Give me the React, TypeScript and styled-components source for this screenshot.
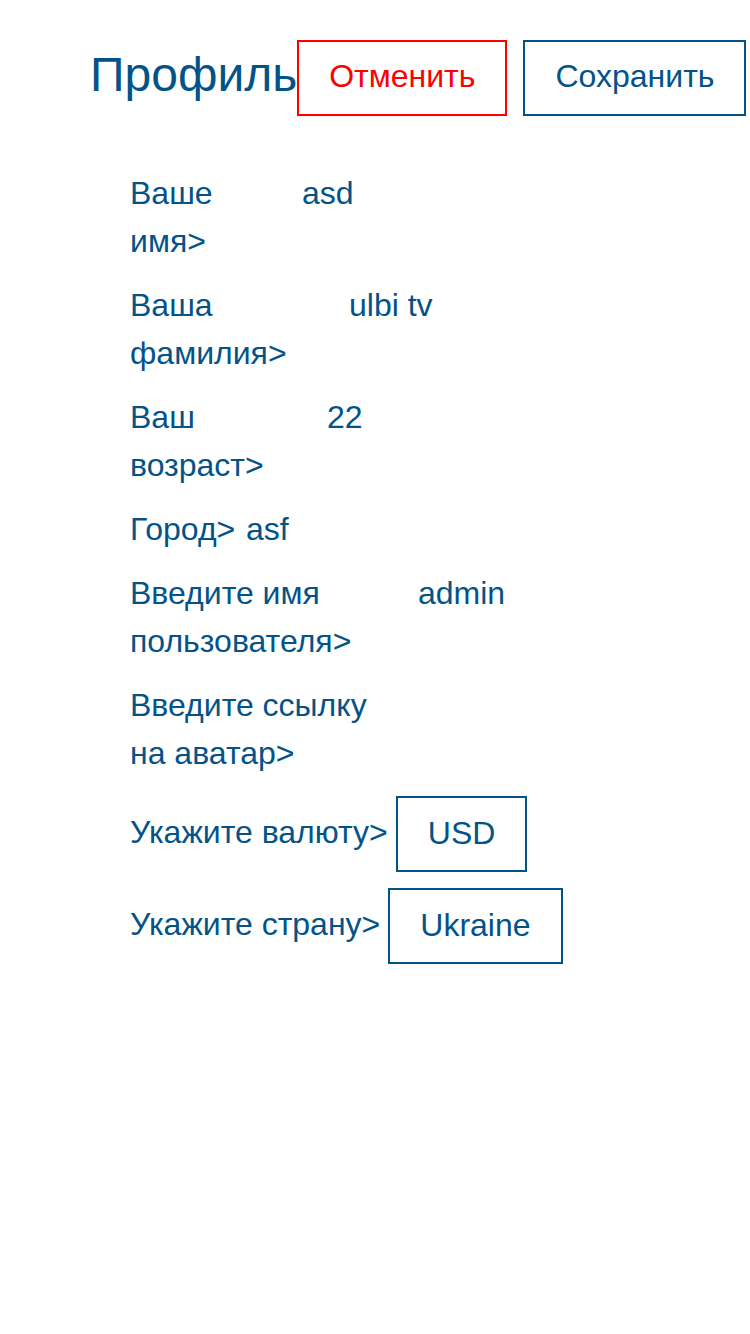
import React, { FC } from "react";
import styled, { createGlobalStyle } from "styled-components";

const primary = "#045388";
const danger = "#ff0000";

const GlobalStyle = createGlobalStyle`
  body {
    margin: 0;
    background: #fff;
    font-family: "Liberation Sans", Arial, sans-serif;
    color: ${primary};
  }
`;

interface Field {
  label: string;
  value: string;
  labelWidth?: number;
}

const fields: Field[] = [
  { label: "Ваше имя>", value: "asd", labelWidth: 164 },
  { label: "Ваша фамилия>", value: "ulbi tv", labelWidth: 211 },
  { label: "Ваш возраст>", value: "22", labelWidth: 189 },
  { label: "Город>", value: "asf", labelWidth: 108 },
  { label: "Введите имя пользователя>", value: "admin", labelWidth: 280 },
  { label: "Введите ссылку на аватар>", value: "", labelWidth: 250 },
];

const selects = [
  { label: "Укажите валюту>", value: "USD" },
  { label: "Укажите страну>", value: "Ukraine" },
];

const App: FC = () => {
  return (
    <>
      <GlobalStyle />
      <Page>
        <Header>
          <Title>Профиль</Title>
          <Buttons>
            <Button variant="danger">Отменить</Button>
            <Button>Сохранить</Button>
          </Buttons>
        </Header>

        <Form>
          {fields.map((f) => (
            <Row key={f.label}>
              <Label width={f.labelWidth}>{f.label}</Label>
              <Value>{f.value}</Value>
            </Row>
          ))}
          <SelectGroup>
            {selects.map((s) => (
              <Row key={s.label}>
                <Label lift>{s.label}</Label>
                <SelectBox>{s.value}</SelectBox>
              </Row>
            ))}
          </SelectGroup>
        </Form>
      </Page>
    </>
  );
};

export default App;

const Page = styled.div`
  width: 750px;
  min-height: 1334px;
  box-sizing: border-box;
  padding: 40px 4px 0 90px;
`;

const Header = styled.div`
  display: flex;
  align-items: center;
  justify-content: space-between;
`;

const Title = styled.h1`
  margin: 0 0 6px;
  font-size: 48px;
  font-weight: 400;
  line-height: 70px;
  color: ${primary};
`;

const Buttons = styled.div`
  display: flex;
  gap: 16px;
`;

const Button = styled.button<{ variant?: "danger" }>`
  height: 76px;
  padding: 0 30px 5px;
  background: transparent;
  border: 2px solid ${(p) => (p.variant === "danger" ? danger : primary)};
  color: ${(p) => (p.variant === "danger" ? danger : primary)};
  font-family: "Liberation Sans", Arial, sans-serif;
  font-size: 32px;
  line-height: 36px;
  cursor: pointer;
`;

const Form = styled.div`
  display: flex;
  flex-direction: column;
  gap: 16px;
  margin-top: 53px;
  padding-left: 40px;
`;

const SelectGroup = styled.div`
  display: flex;
  flex-direction: column;
  gap: 16px;
  padding-top: 3px;
`;

const Row = styled.div`
  display: flex;
  align-items: flex-start;
  gap: 8px;
  font-size: 32px;
  line-height: 48px;
`;

const Label = styled.div<{ width?: number; lift?: boolean }>`
  flex: 0 0 ${(p) => (p.width ? `${p.width}px` : "auto")};
  align-self: center;
  padding-bottom: ${(p) => (p.lift ? "5px" : "0")};
`;

const Value = styled.div`
  min-width: 200px;
`;

const SelectBox = styled.div`
  height: 76px;
  box-sizing: border-box;
  padding: 0 30px 2px;
  border: 2px solid ${primary};
  display: flex;
  align-items: center;
`;
